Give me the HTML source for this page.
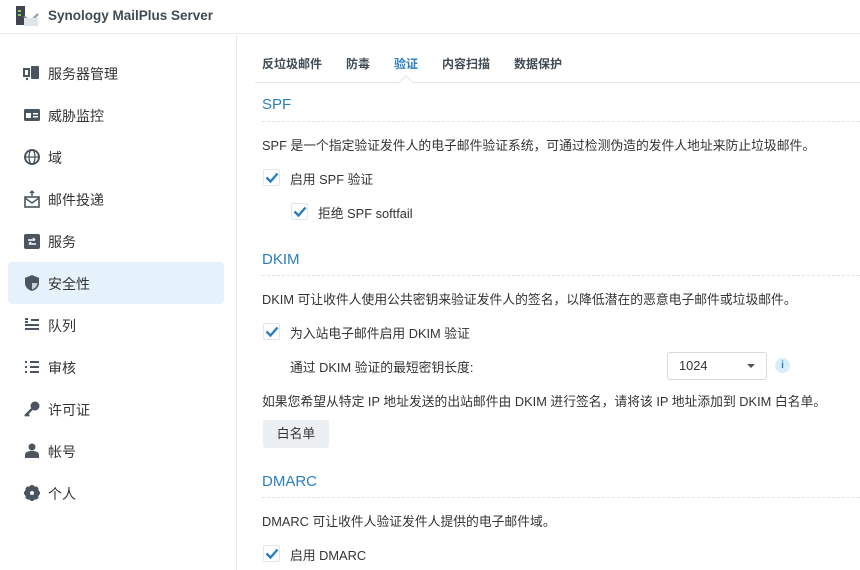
<!DOCTYPE html><html><head><meta charset="utf-8"><style>
*{margin:0;padding:0;box-sizing:border-box}
body{width:860px;height:570px;overflow:hidden;background:#fff;font-family:"Liberation Sans","Noto Sans CJK SC",sans-serif;color:#333;font-size:12.8px;position:relative}
.a{position:absolute;white-space:nowrap}
.hdr{left:0;top:0;width:860px;height:34px;border-bottom:1px solid #e6e9ee}
.side{left:236px;top:35px;width:1px;height:535px;background:#e6e9ee}
.nav{left:48px;font-size:14px;color:#333}
.ic{left:23px;width:18px;height:18px}
.sel{left:8px;top:262px;width:216px;height:42px;background:#e5f1fb;border-radius:4px}
.tab{top:55px;font-size:12px;font-weight:bold;color:#414b55}
.sec{left:262px;font-size:15px;color:#2a7ebf}
.dl{left:262px;width:598px;border-top:1px dashed #dfe3e8}
.cb{width:17px;height:17px;border:1px solid #e3e7eb;border-radius:2px;background:#fff}
.cb svg{position:absolute;left:1px;top:1px}
</style></head><body>
<div class="a hdr"></div>
<svg class="a" style="left:15px;top:5px" width="24" height="22"><rect x="1" y="1" width="9" height="19" fill="#3f464f"/><rect x="3" y="5" width="3" height="2" fill="#7ccf59"/><rect x="3" y="9" width="3" height="2" fill="#7ccf59"/><path d="M9 11 L15 17 L23 9" stroke="#8a96a3" stroke-width="2" fill="none"/><rect x="9" y="13" width="14" height="8" fill="#dfe5ec"/></svg>
<div class="a" style="left:48px;top:8px;font-size:13.5px;font-weight:bold;color:#414b55">Synology MailPlus Server</div>
<div class="a side"></div>
<div class="a sel"></div>
<svg class="a ic" style="top:64px" viewBox="0 0 18 18"><rect x="1" y="5" width="5" height="7" fill="none" stroke="#4a5560" stroke-width="2"/><rect x="8" y="2" width="8" height="13" rx="1" fill="#4a5560"/><circle cx="4" cy="15" r="1.2" fill="#4a5560"/></svg>
<div class="a nav" style="top:64px">服务器管理</div>
<svg class="a ic" style="top:106px" viewBox="0 0 18 18"><rect x="1" y="3" width="16" height="12" rx="1.5" fill="#4a5560"/><rect x="3" y="7" width="5" height="5" fill="#fff"/><rect x="10" y="7" width="5" height="1.5" fill="#fff"/><rect x="10" y="10" width="5" height="1.5" fill="#fff"/></svg>
<div class="a nav" style="top:106px">威胁监控</div>
<svg class="a ic" style="top:148px" viewBox="0 0 18 18"><circle cx="9" cy="9" r="7" fill="none" stroke="#4a5560" stroke-width="2"/><ellipse cx="9" cy="9" rx="3" ry="7" fill="none" stroke="#4a5560" stroke-width="1.3"/><path d="M2 9H16" stroke="#4a5560" stroke-width="1.3"/></svg>
<div class="a nav" style="top:148px">域</div>
<svg class="a ic" style="top:190px" viewBox="0 0 18 18"><rect x="2" y="7" width="14" height="10" fill="none" stroke="#4a5560" stroke-width="1.6"/><path d="M2 8L9 13L16 8" stroke="#4a5560" stroke-width="1.4" fill="none"/><path d="M9 1V6M7 3L9 1L11 3" stroke="#4a5560" stroke-width="1.4" fill="none"/></svg>
<div class="a nav" style="top:190px">邮件投递</div>
<svg class="a ic" style="top:232px" viewBox="0 0 18 18"><rect x="1" y="2" width="16" height="15" rx="2" fill="#4a5560"/><path d="M5 8H12M10 6L12 8M13 12H6M8 10L6 12" stroke="#fff" stroke-width="1.5" fill="none"/></svg>
<div class="a nav" style="top:232px">服务</div>
<svg class="a ic" style="top:274px" viewBox="0 0 18 18"><path d="M9 1L16 4V9C16 13 13 16 9 17C5 16 2 13 2 9V4Z" fill="#4a5560"/><path d="M9 3V9H14.5C14 12.5 12 14.5 9 15.5Z" fill="#c8d0d8"/></svg>
<div class="a nav" style="top:274px">安全性</div>
<svg class="a ic" style="top:316px" viewBox="0 0 18 18"><path d="M2 3H5M2 6H5M2 9H16M2 13H16M8 4H16" stroke="#4a5560" stroke-width="2"/></svg>
<div class="a nav" style="top:316px">队列</div>
<svg class="a ic" style="top:358px" viewBox="0 0 18 18"><path d="M2 4H4M2 9H4M2 14H4M7 4H16M7 9H16M7 14H16" stroke="#4a5560" stroke-width="2"/></svg>
<div class="a nav" style="top:358px">审核</div>
<svg class="a ic" style="top:400px" viewBox="0 0 18 18"><circle cx="12" cy="6" r="4.5" fill="#4a5560"/><path d="M9 9L2 16M4 14L6 16" stroke="#4a5560" stroke-width="2.4"/></svg>
<div class="a nav" style="top:400px">许可证</div>
<svg class="a ic" style="top:442px" viewBox="0 0 18 18"><circle cx="9" cy="5" r="3.5" fill="#4a5560"/><path d="M2 16V13C2 10 5 9 9 9C13 9 16 10 16 13V16Z" fill="#4a5560"/></svg>
<div class="a nav" style="top:442px">帐号</div>
<svg class="a ic" style="top:484px" viewBox="0 0 18 18"><circle cx="9" cy="9" r="5.5" fill="none" stroke="#4a5560" stroke-width="3.5"/><path d="M9 1V17M1 9H17M3.3 3.3L14.7 14.7M14.7 3.3L3.3 14.7" stroke="#4a5560" stroke-width="3"/><circle cx="9" cy="9" r="2" fill="#fff"/></svg>
<div class="a nav" style="top:484px">个人</div>

<div class="a tab" style="left:262px">反垃圾邮件</div>
<div class="a tab" style="left:346px">防毒</div>
<div class="a tab" style="left:394px;color:#2a7ebf">验证</div>
<div class="a tab" style="left:442px">内容扫描</div>
<div class="a tab" style="left:514px">数据保护</div>
<div class="a" style="left:255px;top:82px;width:605px;border-top:1px solid #e3e7eb"></div>
<div class="a" style="left:401px;top:77px;width:10px;height:10px;background:#fff;border-left:1px solid #e3e7eb;border-top:1px solid #e3e7eb;transform:rotate(45deg)"></div>

<div class="a sec" style="top:96px">SPF</div>
<div class="a dl" style="top:121px"></div>
<div class="a" style="left:262px;top:135px">SPF 是一个指定验证发件人的电子邮件验证系统，可通过检测伪造的发件人地址来防止垃圾邮件。</div>
<div class="a cb" style="left:263px;top:169px"><svg width="14" height="13"><path d="M1.5 6.5L5.5 10.5L12.5 2.5" stroke="#2a7ebf" stroke-width="2.4" fill="none"/></svg></div>
<div class="a" style="left:290px;top:169px">启用 SPF 验证</div>
<div class="a cb" style="left:291px;top:203px"><svg width="14" height="13"><path d="M1.5 6.5L5.5 10.5L12.5 2.5" stroke="#2a7ebf" stroke-width="2.4" fill="none"/></svg></div>
<div class="a" style="left:318px;top:203px">拒绝 SPF softfail</div>

<div class="a sec" style="top:251px">DKIM</div>
<div class="a dl" style="top:275px"></div>
<div class="a" style="left:262px;top:289px">DKIM 可让收件人使用公共密钥来验证发件人的签名，以降低潜在的恶意电子邮件或垃圾邮件。</div>
<div class="a cb" style="left:263px;top:323px"><svg width="14" height="13"><path d="M1.5 6.5L5.5 10.5L12.5 2.5" stroke="#2a7ebf" stroke-width="2.4" fill="none"/></svg></div>
<div class="a" style="left:290px;top:323px">为入站电子邮件启用 DKIM 验证</div>
<div class="a" style="left:290px;top:357px">通过 DKIM 验证的最短密钥长度:</div>
<div class="a" style="left:667px;top:352px;width:100px;height:28px;border:1px solid #d6dbe1;border-radius:3px"></div>
<div class="a" style="left:679px;top:358px">1024</div>
<div class="a" style="left:747px;top:364px;width:0;height:0;border-left:4px solid transparent;border-right:4px solid transparent;border-top:4px solid #555"></div>
<div class="a" style="left:775px;top:358px;width:15px;height:15px;border-radius:50%;background:#d8ecfa;color:#2a7ebf;font-size:10px;font-weight:bold;text-align:center;line-height:15px">i</div>
<div class="a" style="left:262px;top:391px">如果您希望从特定 IP 地址发送的出站邮件由 DKIM 进行签名，请将该 IP 地址添加到 DKIM 白名单。</div>
<div class="a" style="left:263px;top:420px;width:66px;height:28px;background:#eceff2;border-radius:3px;text-align:center;line-height:28px">白名单</div>

<div class="a sec" style="top:473px">DMARC</div>
<div class="a dl" style="top:497px"></div>
<div class="a" style="left:262px;top:511px">DMARC 可让收件人验证发件人提供的电子邮件域。</div>
<div class="a cb" style="left:263px;top:545px"><svg width="14" height="13"><path d="M1.5 6.5L5.5 10.5L12.5 2.5" stroke="#2a7ebf" stroke-width="2.4" fill="none"/></svg></div>
<div class="a" style="left:290px;top:545px">启用 DMARC</div>
</body></html>
